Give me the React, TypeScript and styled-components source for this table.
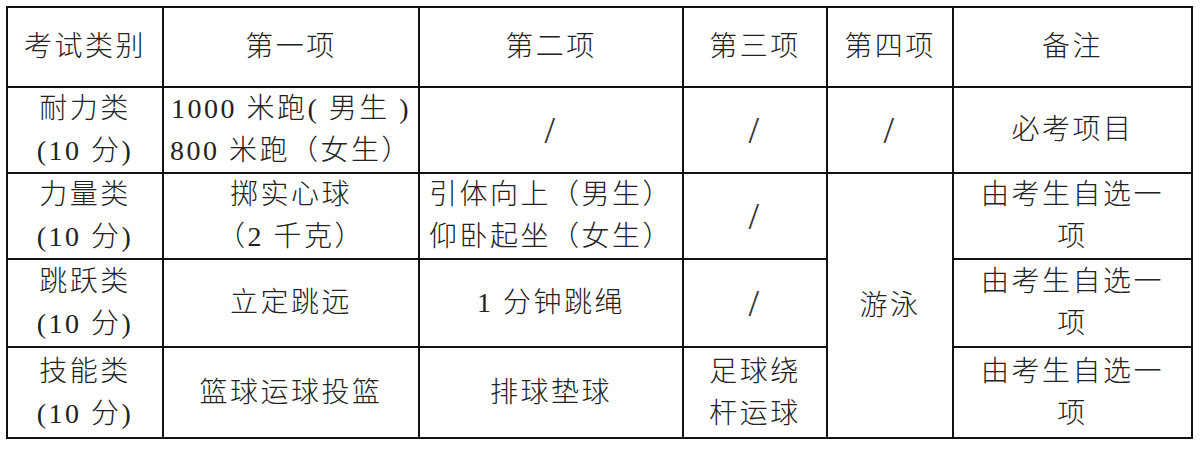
import React from "react";
import styled, { createGlobalStyle } from "styled-components";

const Global = createGlobalStyle`
  html, body { margin: 0; padding: 0; background: #ffffff; }
  body { width: 1200px; height: 450px; overflow: hidden; }
`;

const Page = styled.div`
  padding: 6px 0 0 6px;
`;

const Grid = styled.div`
  display: grid;
  width: max-content;
  grid-template-columns: 154px 254px 262px 142px 124px 237px;
  grid-template-rows: 78px 84px 84px 86px 89px;
  gap: 2px;
  padding: 2px;
  background: #111111;
`;

const Cell = styled.div<{ $rowSpan?: number }>`
  background: #ffffff;
  display: flex;
  flex-direction: column;
  align-items: center;
  justify-content: center;
  font-family: "Liberation Serif", "Noto Sans CJK SC", serif;
  font-size: 28px;
  font-weight: 300;
  letter-spacing: 2.5px;
  line-height: 42px;
  color: #222222;
  white-space: pre;
  ${(p) => (p.$rowSpan ? `grid-row: span ${p.$rowSpan};` : "")}
`;

const Line = styled.span`
  display: block;
`;

const Slash = styled.span`
  font-family: "Liberation Serif", serif;
  font-weight: 400;
  font-size: 38px;
  line-height: 40px;
  color: #333333;
`;

const T = ({ lines }: { lines: string[] }) => (
  <>
    {lines.map((l, i) => (
      <Line key={i}>{l}</Line>
    ))}
  </>
);

export default function App() {
  return (
    <>
      <Global />
      <Page>
        <Grid>
          <Cell><T lines={["考试类别"]} /></Cell>
          <Cell><T lines={["第一项"]} /></Cell>
          <Cell><T lines={["第二项"]} /></Cell>
          <Cell><T lines={["第三项"]} /></Cell>
          <Cell><T lines={["第四项"]} /></Cell>
          <Cell><T lines={["备注"]} /></Cell>

          <Cell><T lines={["耐力类", "(10 分)"]} /></Cell>
          <Cell><T lines={["1000 米跑( 男生 )", "800 米跑（女生）"]} /></Cell>
          <Cell><Slash>/</Slash></Cell>
          <Cell><Slash>/</Slash></Cell>
          <Cell><Slash>/</Slash></Cell>
          <Cell><T lines={["必考项目"]} /></Cell>

          <Cell><T lines={["力量类", "(10 分)"]} /></Cell>
          <Cell><T lines={["掷实心球", "（2 千克）"]} /></Cell>
          <Cell><T lines={["引体向上（男生）", "仰卧起坐（女生）"]} /></Cell>
          <Cell><Slash>/</Slash></Cell>
          <Cell $rowSpan={3}><T lines={["游泳"]} /></Cell>
          <Cell><T lines={["由考生自选一", "项"]} /></Cell>

          <Cell><T lines={["跳跃类", "(10 分)"]} /></Cell>
          <Cell><T lines={["立定跳远"]} /></Cell>
          <Cell><T lines={["1 分钟跳绳"]} /></Cell>
          <Cell><Slash>/</Slash></Cell>
          <Cell><T lines={["由考生自选一", "项"]} /></Cell>

          <Cell><T lines={["技能类", "(10 分)"]} /></Cell>
          <Cell><T lines={["篮球运球投篮"]} /></Cell>
          <Cell><T lines={["排球垫球"]} /></Cell>
          <Cell><T lines={["足球绕", "杆运球"]} /></Cell>
          <Cell><T lines={["由考生自选一", "项"]} /></Cell>
        </Grid>
      </Page>
    </>
  );
}
